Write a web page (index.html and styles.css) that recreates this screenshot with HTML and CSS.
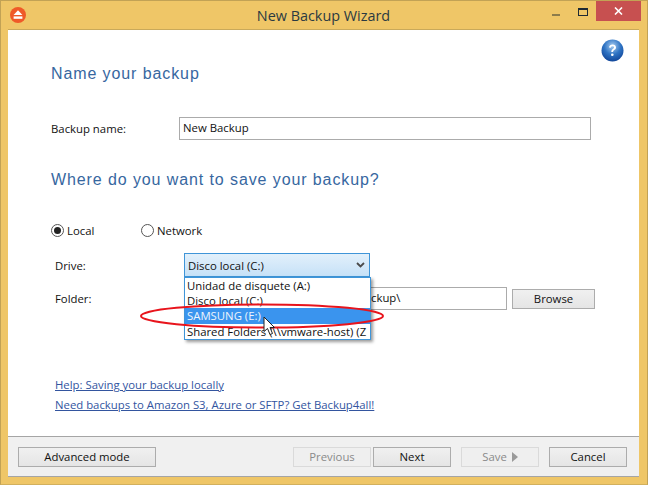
FILE: index.html
```html
<!DOCTYPE html>
<html lang="en">
<head>
<meta charset="utf-8">
<title>New Backup Wizard</title>
<link rel="stylesheet" href="styles.css">
</head>
<body>
<div class="window">
  <header class="titlebar">
    <svg class="app-icon" width="16" height="16" viewBox="0 0 16 16"><circle cx="8" cy="8" r="8" fill="#ef5a28"/><path d="M8 3.2 12.4 8H3.6Z" fill="#fff"/><rect x="3.6" y="9.4" width="8.8" height="2.4" fill="#fff"/></svg>
    <div class="title">New Backup Wizard</div>
    <div class="controls">
      <span class="ctl-min"></span>
      <span class="ctl-max"></span>
      <span class="ctl-close"><svg width="9" height="8" viewBox="0 0 9 8"><path d="M1 0.5 8 7.5M8 0.5 1 7.5" stroke="#fff" stroke-width="1.6"/></svg></span>
    </div>
  </header>
  <main class="content">
    <div class="help-row">
      <svg width="23" height="23" viewBox="0 0 23 23"><defs><radialGradient id="hg" cx="50%" cy="30%" r="75%"><stop offset="0" stop-color="#a9cdf0"/><stop offset=".5" stop-color="#2f74c4"/><stop offset="1" stop-color="#0c3f93"/></radialGradient></defs><circle cx="11.5" cy="11.5" r="11" fill="url(#hg)"/><path d="M8 8.6c.2-2 1.700-3 3.600-3 2 0 3.400 1.100 3.400 2.800 0 2.300-2.900 2.400-2.900 4.500h-1.800c0-2.900 2.700-3 2.700-4.400 0-.8-.6-1.300-1.500-1.300-1 0-1.500.6-1.700 1.500Z" fill="#fff"/><circle cx="11.300" cy="15.800" r="1.300" fill="#fff"/></svg>
    </div>
    <h2 class="heading heading-first">Name your backup</h2>
    <div class="name-row">
      <label class="name-label">Backup name:</label>
      <div class="input name-input">New Backup</div>
    </div>
    <h2 class="heading heading-second">Where do you want to save your backup?</h2>
    <div class="radios">
      <span class="radio-item radio-local"><span class="radio checked"></span>Local</span>
      <span class="radio-item"><span class="radio"></span>Network</span>
    </div>
    <div class="drive-row">
      <label class="field-label">Drive:</label>
      <div class="combo">
        <span>Disco local (C:)</span>
        <svg width="9" height="6" viewBox="0 0 9 6"><path d="M1 1 4.500 4.500 8 1" fill="none" stroke="#4a4a4a" stroke-width="1.800"/></svg>
      </div>
    </div>
    <div class="folder-row">
      <label class="field-label">Folder:</label>
      <div class="input folder-input">ckup\</div>
      <div class="btn browse">Browse</div>
    </div>
    <div class="links">
      <a class="link" href="#">Help: Saving your backup locally</a>
      <a class="link" href="#">Need backups to Amazon S3, Azure or SFTP? Get Backup4all!</a>
    </div>
    <ul class="dropdown">
      <li>Unidad de disquete (A:)</li>
      <li>Disco local (C:)</li>
      <li class="selected">SAMSUNG (E:)</li>
      <li>Shared Folders (\\vmware-host) (Z</li>
    </ul>
    <svg class="ring" width="246" height="26" viewBox="0 0 246 26"><ellipse cx="123" cy="13" rx="121" ry="11.500" fill="none" stroke="#e8141c" stroke-width="2"/></svg>
    <svg class="cursor" width="14" height="20" viewBox="0 0 14 20"><path d="M1 1V15.500L4.500 12.500 7 18.500 9.500 17.500 7 11.500H11.500Z" fill="#fff" stroke="#222" stroke-width="1"/></svg>
  </main>
  <footer class="footer">
    <div class="btn advanced">Advanced mode</div>
    <div class="nav">
      <div class="btn nav-btn disabled">Previous</div>
      <div class="btn nav-btn">Next</div>
      <div class="btn nav-btn disabled save">Save <svg width="6" height="10" viewBox="0 0 6 10"><path d="M0 0 6 5 0 10Z" fill="#9a9a9a"/></svg></div>
      <div class="btn nav-btn">Cancel</div>
    </div>
  </footer>
</div>
</body>
</html>
```
FILE: styles.css
```css
* { box-sizing: border-box; }
html, body { margin: 0; padding: 0; }
body {
  width: 648px;
  height: 485px;
  overflow: hidden;
  font-family: "Open Sans", "Noto Sans", sans-serif;
  font-size: 11.35px;
  color: #111;
  background: #efc667;
}
.window {
  width: 648px;
  height: 485px;
  display: flex;
  flex-direction: column;
  background: #efc667;
  border: 1px solid #c2a255;
  border-bottom-color: #d2b05d;
}
.titlebar {
  height: 29px;
  flex: none;
  display: flex;
  align-items: flex-start;
  position: relative;
  border-bottom: 1px solid #c9a95a;
  margin: 0 8px 0 7px;
}
.app-icon { margin: 6px 0 0 2px; }
.title {
  position: absolute;
  left: 0;
  right: 0;
  top: 5px;
  text-align: center;
  font-size: 14.4px;
  line-height: 20px;
  color: #2b3a42;
}
.controls {
  margin-left: auto;
  display: flex;
  align-items: flex-start;
  margin-right: -2px;
  position: relative;
}
.ctl-min { width: 8px; height: 2px; background: #8d7c4b; margin: 13px 18px 0 0; }
.ctl-max { width: 10px; height: 8px; border: 1px solid #1e2a33; border-top-width: 2px; margin: 7px 8px 0 0; }
.ctl-close {
  width: 45px;
  height: 20px;
  background: #c75050;
  display: flex;
  align-items: center;
  justify-content: center;
}
.content {
  flex: 1;
  margin: 0 8px 0 7px;
  background: #fff;
  position: relative;
  padding: 0 0 0 43px;
  min-height: 0;
}
.help-row {
  display: flex;
  justify-content: flex-end;
  padding: 9px 15px 0 0;
  height: 34px;
}
.heading {
  margin: 0;
  font-family: "Liberation Sans", Arial, sans-serif;
  font-weight: 400;
  font-size: 16px;
  line-height: 20px;
  letter-spacing: 0.9px;
  color: #37679f;
}
.name-row {
  display: flex;
  align-items: center;
  margin-top: 33px;
  height: 23px;
}
.name-label { width: 128px; }
.input {
  border: 1px solid #ababab;
  background: #fff;
  padding-left: 3px;
  height: 23px;
  line-height: 19px;
}
.name-input { width: 412px; }
.heading-second { margin-top: 30px; }
.radios {
  display: flex;
  margin-top: 31px;
  height: 18px;
  align-items: center;
}
.radio-item { display: flex; align-items: center; }
.radio-local { width: 90px; }
.radio {
  width: 13px;
  height: 13px;
  border-radius: 50%;
  border: 1px solid #555;
  background: #fff;
  margin-right: 3px;
  display: flex;
  align-items: center;
  justify-content: center;
}
.radio.checked::before {
  content: "";
  width: 7px;
  height: 7px;
  border-radius: 50%;
  background: #222;
}
.drive-row {
  display: flex;
  align-items: center;
  margin-top: 14px;
  padding-left: 4px;
  height: 24px;
}
.field-label { width: 129px; }
.combo {
  width: 186px;
  height: 24px;
  border: 1px solid #3f95d8;
  background: linear-gradient(#e2f0fb, #c6e1f7);
  display: flex;
  align-items: center;
  justify-content: space-between;
  padding: 0 4px 0 3px;
}
.folder-row {
  display: flex;
  align-items: center;
  margin-top: 10px;
  padding-left: 4px;
  height: 23px;
}
.folder-input {
  width: 323px;
  padding-left: 186px;
  white-space: nowrap;
}
.btn {
  display: flex;
  align-items: center;
  justify-content: center;
  border: 1px solid #acacac;
  background: linear-gradient(#f0f0f0, #e5e5e5);
  color: #111;
}
.browse { width: 83px; height: 20px; margin-left: 5px; }
.links {
  display: flex;
  flex-direction: column;
  gap: 3px;
  margin-top: 66px;
  margin-left: 4px;
}
.link {
  color: #33559f;
  text-decoration: underline;
  line-height: 17px;
}
.dropdown {
  position: absolute;
  left: 176px;
  top: 247px;
  width: 187px;
  height: 63px;
  margin: 0;
  padding: 0;
  list-style: none;
  background: #fff;
  border: 1px solid #3f95d8;
  box-shadow: 2px 2px 3px rgba(0, 0, 0, .4);
  white-space: nowrap;
}
.dropdown li { height: 15px; line-height: 15px; padding-left: 2px; }
.dropdown .selected { background: #3a94ee; color: #eef5fc; height: 16px; }
.ring { position: absolute; left: 131px; top: 273px; }
.cursor { position: absolute; left: 255px; top: 286px; }
.footer {
  height: 41px;
  flex: none;
  margin: 0 8px 7px 7px;
  background: #f0f0f0;
  border-top: 1px solid #a5a5a5;
  border-bottom: 1px solid #a5a5a5;
  display: flex;
  align-items: center;
  padding: 0 12px 0 10px;
  justify-content: space-between;
}
.advanced { width: 138px; height: 20px; }
.nav { display: flex; gap: 2px; }
.nav-btn { width: 78px; height: 20px; }
.disabled { color: #8a8a8a; border-color: #dadada; background: #efefef; }
.save { margin-left: 8px; margin-right: 8px; gap: 5px; }
```
